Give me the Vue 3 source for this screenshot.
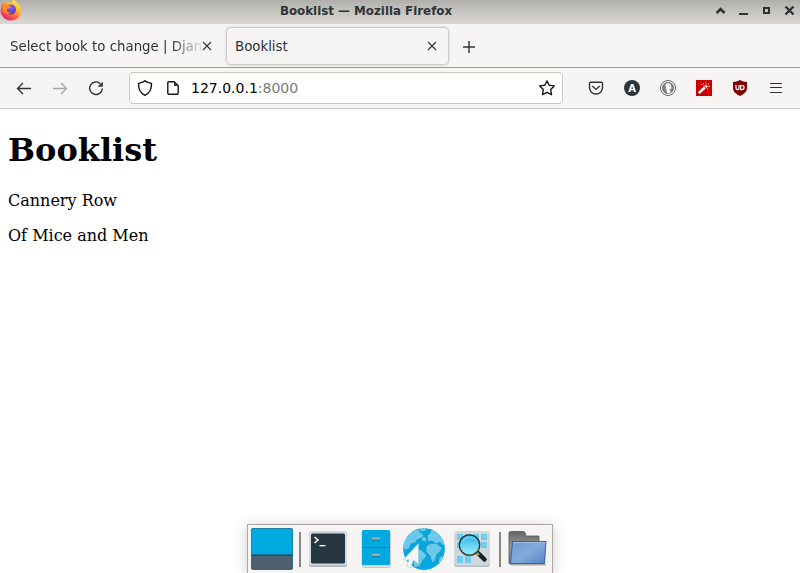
<script setup>
const books = ['Cannery Row', 'Of Mice and Men']
</script>

<template>
  <div class="desktop">
    <header class="titlebar">
      <svg class="fox" width="22" height="22" viewBox="0 0 22 22">
        <defs>
          <linearGradient id="fire" x1=".85" y1=".1" x2=".25" y2="1">
            <stop offset="0" stop-color="#fff04a" />
            <stop offset=".35" stop-color="#ffb22d" />
            <stop offset=".65" stop-color="#ff6038" />
            <stop offset="1" stop-color="#e31587" />
          </linearGradient>
          <radialGradient id="globe" cx=".5" cy=".3" r=".7">
            <stop offset="0" stop-color="#9059ff" />
            <stop offset="1" stop-color="#4b3bb5" />
          </radialGradient>
        </defs>
        <path d="M1 8C1 5 2.500 3 4 1.500L5 3.500C8 2 10 2 12 3C12 1 13 0 14 -1C15 2 18 3 20 6C23 13 19 20.500 11 20.500C5 20.500 .5 16 .5 10Z" fill="url(#fire)" />
        <circle cx="11" cy="9.500" r="5" fill="url(#globe)" />
        <path d="M3 5L6 4C7 5 9 5 11 6L10 8L7 9C6 11 8 13 11 12C9 15 5 14 3 11Z" fill="#ff8b2c" />
      </svg>
      <span class="title">Booklist — Mozilla Firefox</span>
      <svg class="winctl" width="84" height="22" viewBox="716 0 84 22" fill="none" stroke="#2e3436">
        <path d="M716.500 13L720.500 9L724.500 13" stroke-width="2.600" />
        <path d="M739 14H748" stroke-width="2" />
        <rect x="764" y="8" width="5" height="5" stroke-width="2" />
        <path d="M785.500 6.500L793.500 14.500M793.500 6.500L785.500 14.500" stroke-width="2.400" />
      </svg>
    </header>

    <nav class="tabs">
      <div class="tab">
        <span class="label faded">Select book to change | Djan</span>
        <svg class="close" width="10" height="10" viewBox="0 0 10 10"><path d="M1 1L9 9M9 1L1 9" /></svg>
      </div>
      <div class="tab active">
        <span class="label">Booklist</span>
        <svg class="close" width="10" height="10" viewBox="0 0 10 10"><path d="M1 1L9 9M9 1L1 9" /></svg>
      </div>
      <svg class="plus" width="14" height="14" viewBox="0 0 14 14"><path d="M7 1V13M1 7H13" /></svg>
    </nav>

    <div class="toolbar">
      <div class="navs">
        <svg width="16" height="16" viewBox="0 0 16 16"><path d="M15 8.500H1.500M7 3L1.500 8.500L7 14" /></svg>
        <svg class="dim" width="16" height="16" viewBox="0 0 16 16"><path d="M1 8.500H14.500M9 3L14.500 8.500L9 14" /></svg>
        <svg width="16" height="16" viewBox="0 0 16 16">
          <path d="M12.500 3.800A6.300 6.300 0 1 0 14.300 8.500" />
          <path d="M14.800 1.800V6.800H9.600Z" class="solid" />
        </svg>
      </div>
      <div class="urlbar">
        <svg width="16" height="16" viewBox="0 0 16 16"><path d="M8 .8C10 2.500 12 2.800 14.500 3.500C14.600 9 13 13 8 15.300C3 13 1.400 9 1.500 3.500C4 2.800 6 2.500 8 .8Z" /></svg>
        <svg class="page" width="16" height="16" viewBox="0 0 16 16">
          <path d="M3.800 1.700H9.200L13.200 5.700V13.300Q13.200 14.300 12.200 14.300H3.800Q2.800 14.300 2.800 13.300V2.700Q2.800 1.700 3.800 1.700Z" />
          <path d="M9 1.500V6H13.500Z" class="solid" />
        </svg>
        <span class="url">127.0.0.1<span class="port">:8000</span></span>
        <svg class="star" width="16" height="16" viewBox="0 0 16 16"><path d="M8 .9L10.200 5.200L15.300 5.900L11.700 9.500L12.500 14.700L8 12.300L3.500 14.700L4.300 9.500L.7 5.900L5.800 5.200Z" stroke-linejoin="round" /></svg>
      </div>
      <div class="extensions">
        <svg width="16" height="16" viewBox="0 0 16 16">
          <path d="M2.700 2.200H13.300Q14.500 2.200 14.500 3.400V7.500C14.500 11.500 11.500 14 8 14S1.500 11.500 1.500 7.500V3.400Q1.500 2.200 2.700 2.200Z" />
          <path d="M4.300 6L8 9.400L11.700 6" />
        </svg>
        <svg width="16" height="16" viewBox="0 0 16 16">
          <circle cx="8" cy="8" r="8" fill="#2e3436" stroke="none" />
          <text x="8" y="11.700" text-anchor="middle" font-size="10">A</text>
        </svg>
        <svg width="16" height="16" viewBox="0 0 16 16" class="duck">
          <circle cx="8" cy="8" r="7.500" fill="#fff" />
          <circle cx="8" cy="8" r="5.700" fill="#858585" stroke-width=".7" />
          <path d="M5.500 4.500C6.500 2.500 10.500 2.500 11 6L11.500 8.500L10 10L10.500 13L7.500 13.500L6 8Z" fill="#fff" stroke="none" />
          <path d="M9 6.200H10M9.500 9.500L11.500 9" stroke-width=".8" />
        </svg>
        <svg width="16" height="16" viewBox="0 0 16 16">
          <rect width="16" height="16" fill="#cd0000" stroke="none" />
          <g stroke="#fff"><path d="M2.800 13.200L8.800 7.500" stroke-width="2.500" /><path d="M9.500 7L11 5.500" stroke-width="2.500" /><path d="M5 4.500H6M7.500 3V4.200M9.500 3H10.500M12.500 3.500V4.500M12.500 6.500H14M11.500 8.500V9.500M7.500 6H8.500" stroke-width=".9" /></g>
        </svg>
        <svg width="16" height="16" viewBox="0 0 16 16">
          <path d="M8 0C10 1.200 12.500 2 15 2V7.500C15 12 12 14 8 16C4 14 1 12 1 7.500V2C3.500 2 6 1.200 8 0Z" fill="#800000" stroke="none" />
          <path d="M4 5V8Q4 9.600 5.500 9.600T7 8V5M8.700 5.500H10A2 2 0 0 1 10 9.600H8.700Z" stroke="#fff" stroke-width="1.200" />
        </svg>
        <svg class="menu" width="16" height="16" viewBox="0 0 16 16"><path d="M2 3.500H14M2 7.500H14M2 12.500H14" /></svg>
      </div>
    </div>

    <main class="content">
      <h1>Booklist</h1>
      <p v-for="book in books" :key="book">{{ book }}</p>
    </main>

    <footer class="dock">
      <svg width="304" height="48" viewBox="248 525 304 48">
        <defs>
          <linearGradient id="folder" x1="0" y1="0" x2="1" y2="1">
            <stop offset="0" stop-color="#6f9cd3" /><stop offset=".5" stop-color="#84aadb" /><stop offset="1" stop-color="#5684c4" />
          </linearGradient>
          <linearGradient id="back" x1="0" y1="0" x2="0" y2="1">
            <stop offset="0" stop-color="#666" /><stop offset=".5" stop-color="#999" /><stop offset="1" stop-color="#777" />
          </linearGradient>
          <linearGradient id="lens" x1="0" y1="0" x2="0" y2="1">
            <stop offset="0" stop-color="#25b4e4" /><stop offset="1" stop-color="#a4eefa" />
          </linearGradient>
          <clipPath id="world"><circle cx="424" cy="549" r="21" /></clipPath>
        </defs>

        <rect x="251" y="528" width="42" height="42" rx="2.500" fill="#4b616f" />
        <path d="M251 555V530.500Q251 528 253.500 528H290.500Q293 528 293 530.500V555Z" fill="#00a9e0" />
        <path d="M251 555H293" stroke="#263943" />
        <rect x="251.500" y="528.500" width="41" height="41" rx="2" fill="none" stroke="#28708a" stroke-opacity=".65" />
        <rect x="299" y="532" width="2" height="35" fill="#888a85" />

        <rect x="309" y="532" width="38" height="35" rx="2.500" fill="#a9b3b9" />
        <rect x="309" y="531" width="38" height="34.500" rx="2.500" fill="#d1d8dd" />
        <rect x="311" y="533.500" width="34" height="30" rx="1.500" fill="#263640" />
        <path d="M314.500 537L318 540L314.500 543" fill="none" stroke="#fff" stroke-width="1.500" />
        <rect x="319.500" y="545" width="6" height="1.300" fill="#fff" />

        <rect x="361.500" y="531" width="29.500" height="37" rx="2" fill="#c5cdd2" />
        <rect x="362" y="530" width="28" height="35.500" rx="1.500" fill="#00a9e0" />
        <path d="M362 547.500H390" stroke="#087da7" />
        <path d="M361.500 566H391" stroke="#e0e5e8" stroke-width="1.500" />
        <path d="M372 538.500H380M372 555H380" stroke="#9cacb7" stroke-width="2.500" />
        <path d="M372 540.200H380M372 556.700H380" stroke="#0a718f" stroke-width=".8" />

        <g clip-path="url(#world)">
          <circle cx="424" cy="549" r="21" fill="#04a7de" />
          <g fill="#69caec" stroke="#1a8db7" stroke-width=".6">
            <path d="M408 534L414 530L419 529L420 532L424 535L422 538L418 539L415 543L411 544L409 549L405 550L402 547V540Z" />
            <path d="M418 528L426 527L427 529L424 532L420 531Z" />
            <path d="M421 539L424 536L427 539L426 542L422 541Z" />
            <path d="M427 536L430 533L432 528L439 529L447 540V546L442 545L440 542L436 544L432 541L428 542Z" />
            <path d="M429 544L436 543L442 548L440 552L437 554L435 561L432 563L430 556L426 552L426 547Z" />
            <path d="M417 548L423 551L427 556L423 560L420 566L414 568L412 554Z" />
            <path d="M439 558L443 554L442 562L438 564Z" />
          </g>
        </g>
        <path d="M418.500 543.500V564L413.500 560L410.500 568L406.500 566L409 560H403Z" fill="#f3f6f8" stroke="#a6cad7" stroke-width=".6" />

        <rect x="454" y="532" width="36" height="35" rx="3" fill="#b5bdc2" />
        <rect x="454" y="531" width="36" height="34.500" rx="3" fill="#d1d8dd" />
        <path d="M457 534H463V540H457ZM465 534H471V540H465ZM473 534H479V540H473ZM481 534H487V540H481ZM457 542H463V548H457ZM481 542H487V548H481ZM457 556H463V563H457ZM465 556H471V563H465Z" fill="#6ecced" />
        <path d="M478.500 553.500L484.500 559.500" stroke="#1c2020" stroke-width="4.500" stroke-linecap="round" />
        <path d="M476 552L479 555" stroke="#d5a347" stroke-width="2" />
        <circle cx="469.500" cy="545" r="10.200" fill="url(#lens)" stroke="#263335" stroke-width="1.300" />
        <path d="M463 542C465 537 471 536 475 539" fill="none" stroke="#60cef0" stroke-width="2" />
        <rect x="499" y="532" width="2" height="35" fill="#888a85" />

        <path d="M509 563.500V533Q509 531.500 510.500 531.500H523.500Q525 531.500 525.500 534L526 536H539V563.500Z" fill="url(#back)" stroke="#555" stroke-width=".8" />
        <path d="M510 564H546V565.500H510Z" fill="#aaa" />
        <path d="M512.500 541.500H546L544.500 563.500H510.500Z" fill="url(#folder)" stroke="#3465a4" />
        <path d="M513.500 542.500H545" stroke="#9dbce3" />
      </svg>
    </footer>
  </div>
</template>

<style>
body { margin: 0; background: #fff; overflow: hidden; }
</style>

<style scoped>
.desktop { width: 800px; height: 573px; display: flex; flex-direction: column; position: relative; overflow: hidden; background: #fff; font-family: "DejaVu Sans", sans-serif; color: #2e3436; }
svg { display: block; flex: none; }
.titlebar { height: 24px; flex: none; display: grid; grid-template-columns: 84px 1fr 84px; background: linear-gradient(#b0afab, #c3c1be 40%, #d5d2cf 90%, #dcd8d5); }
.title { font-size: 11.85px; font-weight: bold; line-height: 22px; text-align: center; white-space: nowrap; padding-right: 68px; }
.tabs { height: 43px; flex: none; display: flex; background: #f6f5f3; border-bottom: 1px solid #999b95; }
.tab { box-sizing: border-box; display: flex; align-items: center; width: 222px; height: 36px; margin-top: 4px; padding: 0 11px 0 10px; font-size: 13.333px; }
.tab.active { width: 221px; margin-left: 5px; padding-left: 8px; padding-right: 11px; border-radius: 4px; background: #f6f5f4; box-shadow: 0 0 3px rgba(0, 0, 0, .45); }
.label { flex: 1; white-space: nowrap; }
.faded { width: 192px; flex: none; mask-image: linear-gradient(90deg, #000 160px, transparent 195px); }
.close path, .plus path { fill: none; stroke: #2e3436; stroke-width: 1.1; }
.plus path { stroke-width: 1.4; }
.plus { margin: 15.5px 0 0 14px; }
.toolbar { height: 40px; flex: none; display: flex; align-items: center; background: #f6f5f3; border-bottom: 1px solid #cdc7c2; }
.navs { display: flex; gap: 20px; padding-left: 16px; width: 113px; }
.toolbar svg { fill: none; stroke: #2e3436; stroke-width: 1.4; }
.toolbar .menu { stroke-width: 1.1; }
.toolbar .dim { opacity: .4; }
.toolbar .solid { fill: #2e3436; stroke: none; }
.urlbar { box-sizing: border-box; width: 434px; height: 32px; flex: none; display: flex; align-items: center; padding: 0 7px; border: 1px solid #cdc7c2; border-radius: 4px; background: #fff; }
.urlbar svg { stroke: #15141a; }
.page { margin-left: 12px; }
.url { margin-left: 10px; color: #000; font-size: 14px; line-height: 20px; }
.port { color: #777; }
.star { margin-left: auto; }
.extensions { display: flex; gap: 20px; margin-left: 25px; }
.extensions text { fill: #fff; stroke: none; font-weight: bold; }
.toolbar .duck { stroke: #666; stroke-width: 1; }
.content { padding: 0 8px; color: #000; font-family: "DejaVu Serif", serif; font-size: 16px; }
.content h1 { margin: 22px 0; font-size: 32px; line-height: 38px; }
.content p { margin: 0 0 16px; line-height: 19px; }
.dock { position: absolute; left: 247px; bottom: 0; border: 1px solid #aaa7a4; border-bottom: 0; background: #f6f5f4; box-shadow: 0 2px 14px rgba(0, 0, 0, .2); }
</style>
